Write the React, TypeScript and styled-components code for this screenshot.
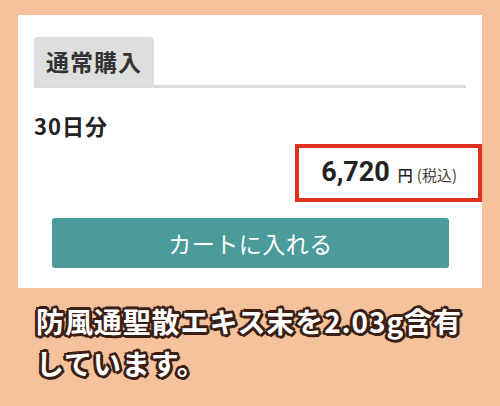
import styled, { createGlobalStyle } from "styled-components";

const GlobalStyle = createGlobalStyle`
  html, body {
    margin: 0;
    padding: 0;
    background: #f5c29b;
  }
  body {
    font-family: "Noto Sans CJK JP", "Noto Sans", sans-serif;
  }
`;

const Page = styled.div`
  width: 500px;
  height: 406px;
  padding-top: 15px;
  box-sizing: border-box;
  display: flex;
  flex-direction: column;
  align-items: center;
`;

const Panel = styled.section`
  width: 464px;
  background: #fff;
  padding: 22px 16px 20px;
  box-sizing: border-box;
  display: flex;
  flex-direction: column;
`;

const TabBar = styled.div`
  display: flex;
  border-bottom: 3px solid #dcdcdc;
`;

const Tab = styled.div`
  background: #dddede;
  border-radius: 4px 4px 0 0;
  width: 120px;
  height: 48px;
  box-sizing: border-box;
  padding: 0 0 0 12px;
  display: flex;
  align-items: center;
  font-size: 23px;
  font-weight: 700;
  color: #333;
  letter-spacing: 1px;
`;

const Term = styled.div`
  margin-top: 22px;
  font-size: 22px;
  font-weight: 700;
  color: #222;
  line-height: 30px;
  letter-spacing: 1px;
`;

const PriceRow = styled.div`
  display: flex;
  justify-content: flex-end;
  margin: 4px -16px 0 0;
`;

const PriceBox = styled.div`
  width: 187px;
  height: 58px;
  box-sizing: border-box;
  border: 4px solid #e0301e;
  display: flex;
  align-items: baseline;
  justify-content: flex-end;
  padding: 8px 21px 0 0;
  color: #222;
`;

const Amount = styled.span`
  font-family: "Roboto", "Noto Sans CJK JP", sans-serif;
  font-size: 27px;
  font-weight: 700;
`;

const Yen = styled.span`
  font-size: 15px;
  font-weight: 500;
  margin-left: 8px;
`;

const Tax = styled.span`
  font-size: 15px;
  color: #444;
  margin-left: 4px;
`;

const CartButton = styled.button`
  margin: 16px 17px 0 18px;
  height: 50px;
  border: none;
  border-radius: 3px;
  background: #4a9b9a;
  color: #fff;
  font-family: "Noto Sans CJK JP", sans-serif;
  font-size: 23px;
  letter-spacing: 0.5px;
`;

const Caption = styled.p`
  margin: 12px 0 0;
  width: 100%;
  box-sizing: border-box;
  padding-left: 36px;
  font-size: 28px;
  font-weight: 700;
  line-height: 42px;
  color: #fff;
  letter-spacing: 0.9px;
  text-shadow:
    2px 0 0 #3b1e14, -2px 0 0 #3b1e14, 0 2px 0 #3b1e14, 0 -2px 0 #3b1e14,
    2px 2px 0 #3b1e14, -2px -2px 0 #3b1e14, 2px -2px 0 #3b1e14, -2px 2px 0 #3b1e14,
    3px 1px 0 #3b1e14, -3px 1px 0 #3b1e14, 1px 3px 0 #3b1e14, 1px -3px 0 #3b1e14;
`;

export default function App() {
  return (
    <>
      <GlobalStyle />
      <Page>
        <Panel>
          <TabBar>
            <Tab>通常購入</Tab>
          </TabBar>
          <Term>30日分</Term>
          <PriceRow>
            <PriceBox>
              <Amount>6,720</Amount>
              <Yen>円</Yen>
              <Tax>(税込)</Tax>
            </PriceBox>
          </PriceRow>
          <CartButton>カートに入れる</CartButton>
        </Panel>
        <Caption>
          防風通聖散エキス末を2.03g含有
          <br />
          しています。
        </Caption>
      </Page>
    </>
  );
}
